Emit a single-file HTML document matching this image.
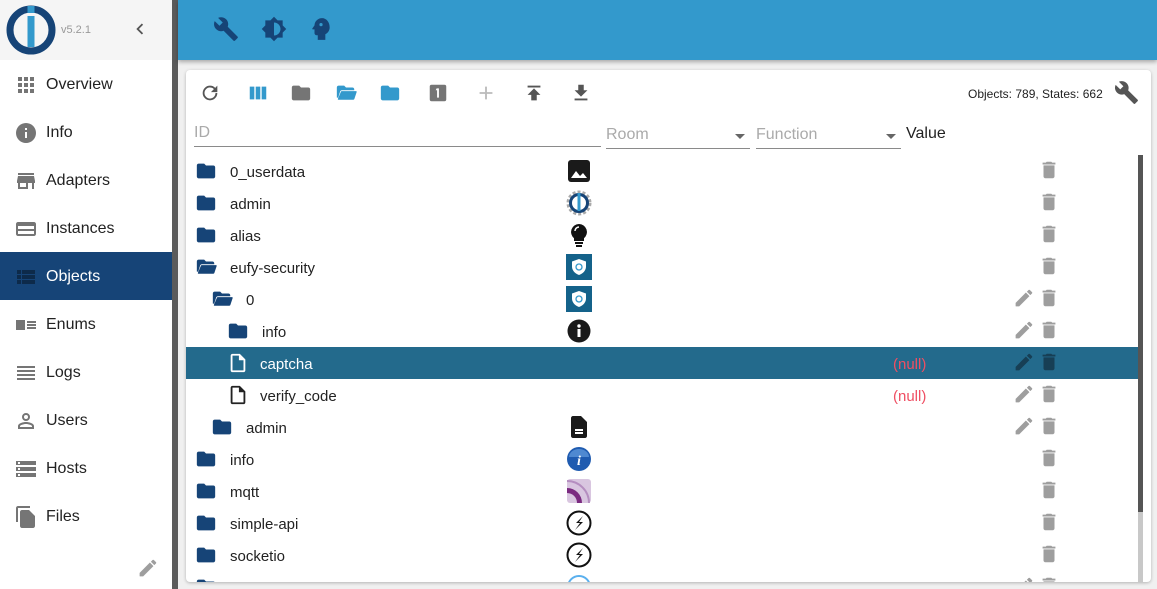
<!DOCTYPE html>
<html><head><meta charset="utf-8">
<style>
*{box-sizing:border-box;margin:0;padding:0}
body{width:1157px;height:589px;overflow:hidden;background:#f0f0f0;font-family:"Liberation Sans",sans-serif;position:relative}
.side{position:absolute;left:0;top:0;width:172px;height:589px;background:#fff}
.shead{height:60px;background:#f5f5f5;position:relative}
.sbar{position:absolute;left:172px;top:0;width:6px;height:589px;background:#5b5b5b}
.item{height:48px;display:flex;align-items:center;font-size:16px;color:#222;padding-left:14px;padding-top:2px}
.item svg{width:24px;height:24px;fill:#757575;margin-right:8px}
.item.sel{background:#164477;color:#fff}
.item.sel svg{fill:#0d2a4a}
.top{position:absolute;left:178px;top:0;width:979px;height:60px;background:#3399cc;box-shadow:0 2px 4px rgba(0,0,0,.3)}
.top svg{position:absolute;top:16px;width:26px;height:26px;fill:#164477}
.card{position:absolute;left:186px;top:70px;width:965px;height:512px;background:#fff;border-radius:4px;box-shadow:0 1px 3px rgba(0,0,0,.25);overflow:hidden}
.tb svg{position:absolute;top:12px;width:22px;height:22px}
.row{position:absolute;left:0;width:952px;height:32px;font-size:15px;color:#222}
.row.sel{background:#236a8c;color:#fff}
.row .ic{position:absolute;top:5px;width:24px;height:22px}
.row .nm{position:absolute;top:9px}
.row .ob{position:absolute;left:380px;top:3px;width:26px;height:26px}
.row .del{position:absolute;left:852px;top:4px;width:22px;height:22px;fill:#9e9e9e}
.row .ed{position:absolute;left:827px;top:4px;width:22px;height:22px;fill:#9e9e9e}
.row.sel .del,.row.sel .ed{fill:#173f55}
.null{position:absolute;left:707px;top:9px;color:#ef4f63;font-size:15px}
.fld{position:absolute;top:55px;height:24px;border-bottom:1px solid #8a8a8a;color:#aaa;font-size:16px}
</style></head><body>
<svg width="0" height="0" style="position:absolute">
<defs>
<symbol id="fold" viewBox="0 0 24 24"><path d="M10 4H4c-1.1 0-2 .9-2 2v12c0 1.1.9 2 2 2h16c1.1 0 2-.9 2-2V8c0-1.1-.9-2-2-2h-8l-2-2z"/></symbol>
<symbol id="fopen" viewBox="0 0 24 24"><path d="M2 6c0-1.1.9-2 2-2h6l2 2h7c1.1 0 2 .9 2 2v1H7.5c-.9 0-1.6.5-1.9 1.3L3.5 17H2V6zm4.5 4.5c.2-.4.6-.5 1-.5H23c.5 0 .8.5.6 1l-2.5 7.5c-.2.5-.6.8-1.1.8H3.6c-.4 0-.6-.4-.5-.7l3.4-8.1z"/></symbol>
<symbol id="del" viewBox="0 0 24 24"><path d="M6 19c0 1.1.9 2 2 2h8c1.1 0 2-.9 2-2V7H6v12zM19 4h-3.5l-1-1h-5l-1 1H5v2h14V4z"/></symbol>
<symbol id="ed" viewBox="0 0 24 24"><path d="M3 17.25V21h3.75L17.81 9.94l-3.75-3.75L3 17.25zM20.71 7.04c.39-.39.39-1.020-1.41l-2.34-2.34a1 1 0 0 0-1.41 0l-1.83 1.83 3.75 3.75 1.830-1.83z"/><path d="M3 17.25V21h3.75L17.81 9.94l-3.75-3.75L3 17.25zM20.71 7.04c.39-.39.39-1.02 0-1.41l-2.34-2.34a1 1 0 0 0-1.41 0l-1.83 1.83 3.75 3.75 1.83-1.83z"/></symbol>
<symbol id="file" viewBox="0 0 24 24"><path d="M14 2H6c-1.1 0-2 .9-2 2v16c0 1.1.9 2 2 2h12c1.1 0 2-.9 2-2V8l-6-6zM6 20V4h7v5h5v11H6z"/></symbol>
<symbol id="wr" viewBox="0 0 24 24"><path d="M22.7 19l-9.1-9.1c.9-2.3.4-5-1.5-6.9-2-2-5-2.4-7.4-1.3L9 6 6 9 1.6 4.7C.4 7.1.9 10.1 2.9 12.1c1.9 1.9 4.6 2.4 6.9 1.5l9.1 9.1c.4.4 1 .4 1.4 0l2.3-2.3c.5-.4.5-1.1.1-1.4z"/></symbol>
<symbol id="bolt" viewBox="0 0 26 26"><circle cx="13" cy="13" r="11.5" fill="#fff" stroke="#111" stroke-width="2"/><path d="M17 6l-7 7h4l-5 7 8-8h-4z" fill="#111"/></symbol>
</defs></svg>

<div class="side">
 <div class="shead">
  <svg style="position:absolute;left:5px;top:3px" width="52" height="52" viewBox="0 0 52 52"><circle cx="26" cy="27" r="21" fill="none" stroke="#164477" stroke-width="7"/><rect x="22.5" y="3" width="7" height="7" fill="#3399cc"/><rect x="22.5" y="13" width="7" height="31" fill="#3399cc"/></svg>
  <span style="position:absolute;left:61px;top:24px;font-size:11px;color:#999">v5.2.1</span>
  <svg style="position:absolute;left:129px;top:18px" width="22" height="22" viewBox="0 0 24 24"><path d="M15.4 7.4L14 6l-6 6 6 6 1.4-1.4L10.8 12z" fill="#555"/></svg>
 </div>
 <div class="item"><svg viewBox="0 0 24 24"><path d="M4 8h4V4H4v4zm6 12h4v-4h-4v4zm-6 0h4v-4H4v4zm0-6h4v-4H4v4zm6 0h4v-4h-4v4zm6-10v4h4V4h-4zm-6 4h4V4h-4v4zm6 6h4v-4h-4v4zm0 6h4v-4h-4v4z"/></svg>Overview</div>
 <div class="item"><svg viewBox="0 0 24 24"><path d="M12 2a10 10 0 100 20 10 10 0 000-20zm1 15h-2v-6h2v6zm0-8h-2V7h2v2z"/></svg>Info</div>
 <div class="item"><svg viewBox="0 0 24 24"><path d="M20 4H4v2h16V4zm1 10v-2l-1-5H4l-1 5v2h1v6h10v-6h4v6h2v-6h1zm-9 4H6v-4h6v4z"/></svg>Adapters</div>
 <div class="item"><svg viewBox="0 0 24 24"><path d="M20 5H4c-1.1 0-2 .9-2 2v10c0 1.1.9 2 2 2h16c1.1 0 2-.9 2-2V7c0-1.1-.9-2-2-2zm0 12H4v-3h16v3zM4 12V9h16v3H4z"/></svg>Instances</div>
 <div class="item sel"><svg viewBox="0 0 24 24"><path d="M3 14h4v-4H3v4zm0 5h4v-4H3v4zM3 9h4V5H3v4zm5 5h13v-4H8v4zm0 5h13v-4H8v4zM8 5v4h13V5H8z"/></svg>Objects</div>
 <div class="item"><svg viewBox="0 0 24 24"><path d="M2 7h9v10H2zM13 8h9v2h-9zm0 3h9v2h-9zm0 3h9v2h-9z"/></svg>Enums</div>
 <div class="item"><svg viewBox="0 0 24 24"><path d="M3 15h18v-2H3v2zm0 4h18v-2H3v2zm0-8h18V9H3v2zm0-6v2h18V5H3z"/></svg>Logs</div>
 <div class="item"><svg viewBox="0 0 24 24"><path d="M12 6a2 2 0 110 4 2 2 0 010-4m0 9c2.7 0 5.8 1.3 6 2v1H6v-1c.2-.7 3.3-2 6-2m0-11a4 4 0 100 8 4 4 0 000-8zm0 9c-2.7 0-8 1.3-8 4v3h16v-3c0-2.7-5.3-4-8-4z"/></svg>Users</div>
 <div class="item"><svg viewBox="0 0 24 24"><path d="M2 20h20v-4H2v4zm2-3h2v2H4v-2zM2 4v4h20V4H2zm4 3H4V5h2v2zm-4 7h20v-4H2v4zm2-3h2v2H4v-2z"/></svg>Hosts</div>
 <div class="item"><svg viewBox="0 0 24 24"><path d="M16 1H4c-1.1 0-2 .9-2 2v14h2V3h12V1zm-1 4l6 6v10c0 1.1-.9 2-2 2H8c-1.1 0-2-.9-2-2V7c0-1.1.9-2 2-2h7z"/></svg>Files</div>
 <svg style="position:absolute;left:137px;top:557px;fill:#9e9e9e" width="22" height="22"><use href="#ed"/></svg>
</div>
<div class="sbar"></div>

<div class="top">
 <svg style="left:35px"><use href="#wr"/></svg>
 <svg style="left:83px" viewBox="0 0 24 24"><path d="M20 8.7V4h-4.7L12 .7 8.7 4H4v4.7L.7 12 4 15.3V20h4.7l3.3 3.3 3.3-3.3H20v-4.7l3.3-3.3L20 8.7zM12 18V6c3.3 0 6 2.7 6 6s-2.7 6-6 6z"/></svg>
 <svg style="left:130px" viewBox="0 0 24 24"><path d="M13 2C9.2 2 6.1 4.9 6 8.7L4 11.5c-.2.3 0 .8.4.8H6v3.5c0 1.1.9 2 2 2h1V22h7v-5.2c2.4-1.1 4-3.5 4-6.3C20 5.6 16.9 2 13 2zm-1 7.5a1.5 1.5 0 110-3 1.5 1.5 0 010 3z"/></svg>
</div>

<div class="card">
 <div class="tb">
  <svg style="left:13px;fill:#555" viewBox="0 0 24 24"><path d="M17.65 6.35A7.96 7.96 0 0012 4a8 8 0 108 8h-2a6 6 0 11-1.76-4.24L13 11h7V4l-2.35 2.35z"/></svg>
  <svg style="left:61px;fill:#3399cc" viewBox="0 0 24 24"><path d="M3 5h5v14H3zM9.5 5h5v14h-5zM16 5h5v14h-5z"/></svg>
  <svg style="left:104px;fill:#757575"><use href="#fold"/></svg>
  <svg style="left:149px;fill:#3399cc"><use href="#fopen"/></svg>
  <svg style="left:193px;fill:#3399cc"><use href="#fold"/></svg>
  <svg style="left:241px" viewBox="0 0 24 24"><rect x="3" y="3" width="18" height="18" rx="2" fill="#757575"/><path d="M10.5 7h2.5v10h-2V9h-1.5z" fill="#fff"/></svg>
  <svg style="left:289px;fill:#bbb" viewBox="0 0 24 24"><path d="M19 13h-6v6h-2v-6H5v-2h6V5h2v6h6v2z"/></svg>
  <svg style="left:337px;fill:#555" viewBox="0 0 24 24"><path d="M5 4v2h14V4H5zm0 10h4v6h6v-6h4l-7-7-7 7z"/></svg>
  <svg style="left:384px;fill:#555" viewBox="0 0 24 24"><path d="M19 9h-4V3H9v6H5l7 7 7-7zM5 18v2h14v-2H5z"/></svg>
 </div>
 <span style="position:absolute;left:782px;top:17px;font-size:12px;color:#222">Objects: 789, States: 662</span>
 <svg style="position:absolute;left:928px;top:10px;fill:#555" width="25" height="25"><use href="#wr"/></svg>
 <div class="fld" style="left:8px;width:407px;top:53px;padding-top:1px">ID</div>
 <div class="fld" style="left:420px;width:144px;padding-top:1px">Room<span style="position:absolute;right:5px;top:9px;border:5px solid transparent;border-top-color:#666"></span></div>
 <div class="fld" style="left:570px;width:145px;padding-top:1px">Function<span style="position:absolute;right:5px;top:9px;border:5px solid transparent;border-top-color:#666"></span></div>
 <span style="position:absolute;left:720px;top:55px;font-size:16px;color:#222">Value</span>

 <div class="row" style="top:85px"><svg class="ic" style="left:8px;fill:#164477"><use href="#fold"/></svg><span class="nm" style="left:44px">0_userdata</span><svg class="ob" viewBox="0 0 26 26"><rect x="2" y="2" width="22" height="22" rx="3" fill="#1a1a1a"/><path d="M5 20l5-7 4 5 3-3 4 5z" fill="#fff"/></svg><svg class="del"><use href="#del"/></svg></div>
 <div class="row" style="top:117px"><svg class="ic" style="left:8px;fill:#164477"><use href="#fold"/></svg><span class="nm" style="left:44px">admin</span><svg class="ob" viewBox="0 0 26 26"><circle cx="13" cy="13" r="11" fill="none" stroke="#aaa" stroke-width="3" stroke-dasharray="3 2"/><circle cx="13" cy="13" r="8.5" fill="none" stroke="#164477" stroke-width="3"/><rect x="11.5" y="3" width="3" height="18" fill="#3399cc"/></svg><svg class="del"><use href="#del"/></svg></div>
 <div class="row" style="top:149px"><svg class="ic" style="left:8px;fill:#164477"><use href="#fold"/></svg><span class="nm" style="left:44px">alias</span><svg class="ob" viewBox="0 0 26 26"><path d="M13 2a8 8 0 00-5 14.2V19h10v-2.8A8 8 0 0013 2z" fill="#111"/><rect x="9" y="20" width="8" height="2" fill="#111"/><rect x="10" y="23" width="6" height="2" fill="#111"/><path d="M9 9a4 4 0 014-4" stroke="#fff" stroke-width="1.5" fill="none"/></svg><svg class="del"><use href="#del"/></svg></div>
 <div class="row" style="top:181px"><svg class="ic" style="left:8px;fill:#164477"><use href="#fopen"/></svg><span class="nm" style="left:44px">eufy-security</span><svg class="ob" viewBox="0 0 26 26"><rect x="0" y="0" width="26" height="26" fill="#14628a"/><path d="M13 5l7 2.5v5c0 4-3 7-7 8.5-4-1.5-7-4.5-7-8.5v-5z" fill="#fff"/><circle cx="13" cy="13" r="3" fill="none" stroke="#3399cc" stroke-width="1.3"/></svg><svg class="del"><use href="#del"/></svg></div>
 <div class="row" style="top:213px"><svg class="ic" style="left:24px;fill:#164477"><use href="#fopen"/></svg><span class="nm" style="left:60px">0</span><svg class="ob" viewBox="0 0 26 26"><rect x="0" y="0" width="26" height="26" fill="#14628a"/><path d="M13 5l7 2.5v5c0 4-3 7-7 8.5-4-1.5-7-4.5-7-8.5v-5z" fill="#fff"/><circle cx="13" cy="13" r="3" fill="none" stroke="#3399cc" stroke-width="1.3"/></svg><svg class="ed"><use href="#ed"/></svg><svg class="del"><use href="#del"/></svg></div>
 <div class="row" style="top:245px"><svg class="ic" style="left:40px;fill:#164477"><use href="#fold"/></svg><span class="nm" style="left:76px">info</span><svg class="ob" viewBox="0 0 26 26"><circle cx="13" cy="13" r="11.5" fill="#1a1a1a"/><rect x="11.5" y="11" width="3" height="8" fill="#fff"/><circle cx="13" cy="8" r="1.7" fill="#fff"/></svg><svg class="ed"><use href="#ed"/></svg><svg class="del"><use href="#del"/></svg></div>
 <div class="row sel" style="top:277px"><svg class="ic" style="left:40px;fill:#fff"><use href="#file"/></svg><span class="nm" style="left:74px">captcha</span><span class="null">(null)</span><svg class="ed"><use href="#ed"/></svg><svg class="del"><use href="#del"/></svg></div>
 <div class="row" style="top:309px"><svg class="ic" style="left:40px;fill:#222"><use href="#file"/></svg><span class="nm" style="left:74px">verify_code</span><span class="null">(null)</span><svg class="ed"><use href="#ed"/></svg><svg class="del"><use href="#del"/></svg></div>
 <div class="row" style="top:341px"><svg class="ic" style="left:24px;fill:#164477"><use href="#fold"/></svg><span class="nm" style="left:60px">admin</span><svg class="ob" viewBox="0 0 26 26"><path d="M15 2H7c-1.1 0-2 .9-2 2v18c0 1.1.9 2 2 2h12c1.1 0 2-.9 2-2V8z" fill="#1a1a1a"/><path d="M9 15h8v2H9zm0 3h8v2H9z" fill="#fff"/></svg><svg class="ed"><use href="#ed"/></svg><svg class="del"><use href="#del"/></svg></div>
 <div class="row" style="top:373px"><svg class="ic" style="left:8px;fill:#164477"><use href="#fold"/></svg><span class="nm" style="left:44px">info</span><svg class="ob" viewBox="0 0 26 26"><circle cx="13" cy="13" r="12" fill="#1f5bb0"/><path d="M3 11a10 8 0 0120 0" fill="#6fa8e8" opacity=".6"/><text x="11" y="19" font-size="14" font-style="italic" font-weight="bold" fill="#fff" font-family="Liberation Serif">i</text></svg><svg class="del"><use href="#del"/></svg></div>
 <div class="row" style="top:405px"><svg class="ic" style="left:8px;fill:#164477"><use href="#fold"/></svg><span class="nm" style="left:44px">mqtt</span><svg class="ob" viewBox="0 0 26 26"><rect x="1" y="1" width="24" height="24" rx="3" fill="#d9c6e0"/><path d="M1 10a15 15 0 0115 15H11A10 10 0 001 15z" fill="#7b2a80"/><path d="M1 3a22 22 0 0122 22" stroke="#b58ec0" stroke-width="2" fill="none"/></svg><svg class="del"><use href="#del"/></svg></div>
 <div class="row" style="top:437px"><svg class="ic" style="left:8px;fill:#164477"><use href="#fold"/></svg><span class="nm" style="left:44px">simple-api</span><svg class="ob"><use href="#bolt"/></svg><svg class="del"><use href="#del"/></svg></div>
 <div class="row" style="top:469px"><svg class="ic" style="left:8px;fill:#164477"><use href="#fold"/></svg><span class="nm" style="left:44px">socketio</span><svg class="ob"><use href="#bolt"/></svg><svg class="del"><use href="#del"/></svg></div>
 <div class="row" style="top:501px"><svg class="ic" style="left:8px;fill:#164477"><use href="#fold"/></svg><svg class="ob" viewBox="0 0 26 26"><circle cx="13" cy="13" r="11" fill="none" stroke="#5ab0ee" stroke-width="2"/></svg><svg class="ed"><use href="#ed"/></svg><svg class="del"><use href="#del"/></svg></div>
 <div style="position:absolute;left:952px;top:85px;width:5px;height:427px;background:#c8c8c8"></div>
 <div style="position:absolute;left:952px;top:85px;width:5px;height:357px;background:#555"></div>
</div>
</body></html>
